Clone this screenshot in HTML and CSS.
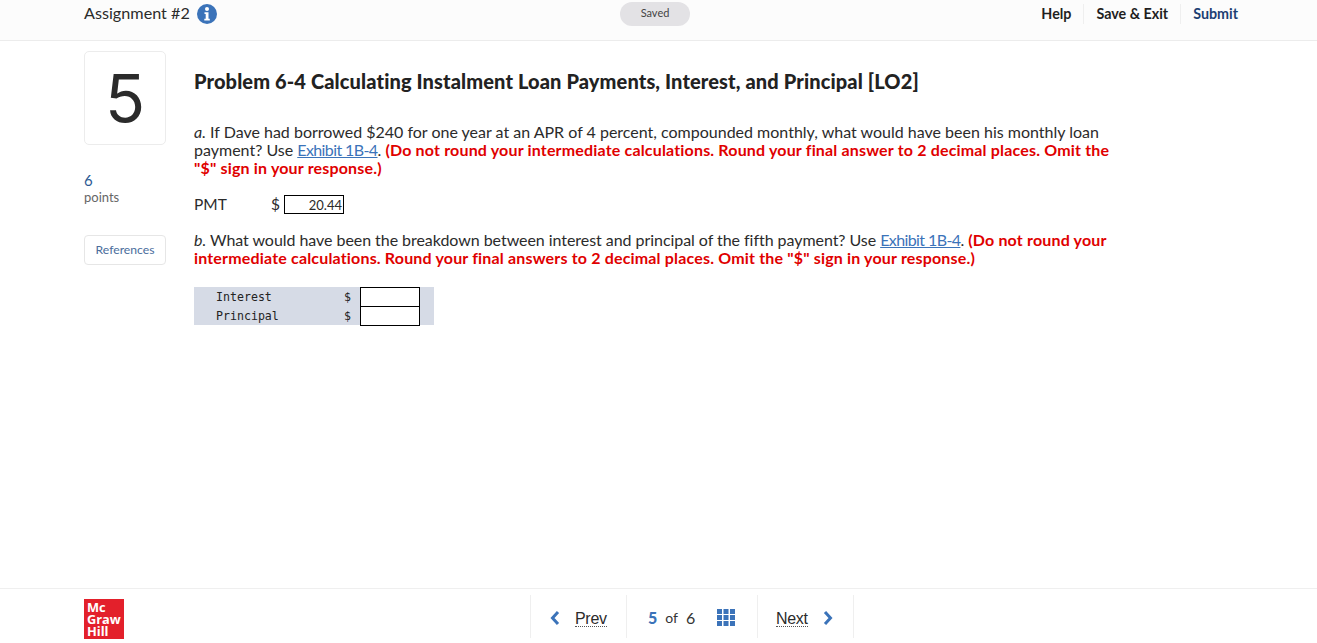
FILE: index.html
```html
<!DOCTYPE html>
<html lang="en">
<head>
    <meta charset="UTF-8">
    <title>Assignment #2</title>
    <link rel="stylesheet" href="styles.css">
</head>
<body>
    <header class="topbar">
        <div class="topbar-left">
            <span class="assignment">Assignment #2</span>
            <svg class="info-icon" viewBox="0 0 20 20" width="20" height="20">
                <circle cx="10" cy="10" r="10" fill="#3b73b9"/>
                <circle cx="10" cy="5" r="2" fill="#fff"/>
                <path d="M7.5 8.2h4v6.6h1.3v1.7H7.3v-1.7h1.4v-4.9H7.5z" fill="#fff"/>
            </svg>
        </div>
        <div class="saved">Saved</div>
        <nav class="topbar-links">
            <a>Help</a>
            <a>Save &amp; Exit</a>
            <a class="submit">Submit</a>
        </nav>
    </header>

    <main class="content">
        <aside class="side">
            <div class="question-num">5</div>
            <div class="points-value">6</div>
            <div class="points-label">points</div>
            <div class="references">References</div>
        </aside>

        <section class="question">
            <h1>Problem 6-4 Calculating Instalment Loan Payments, Interest, and Principal [LO2]</h1>

            <p class="part-a"><i>a.</i> If Dave had borrowed $240 for one year at an APR of 4 percent, compounded monthly, what would have been his monthly loan payment? Use <a class="exhibit">Exhibit 1B-4</a>. <b>(Do not round your intermediate calculations. Round your final answer to 2 decimal places. Omit the "$" sign in your response.)</b></p>

            <div class="pmt-row">
                <span class="pmt-label">PMT</span>
                <span class="pmt-dollar">$</span>
                <span class="answer-box filled">20.44</span>
            </div>

            <p class="part-b"><i>b.</i> What would have been the breakdown between interest and principal of the fifth payment? Use <a class="exhibit">Exhibit 1B-4</a>. <b>(Do not round your intermediate calculations. Round your final answers to 2 decimal places. Omit the "$" sign in your response.)</b></p>

            <div class="answer-table">
                <div class="answer-row">
                    <span class="row-label">Interest</span>
                    <span class="row-dollar">$</span>
                    <span class="answer-box"></span>
                </div>
                <div class="answer-row">
                    <span class="row-label">Principal</span>
                    <span class="row-dollar">$</span>
                    <span class="answer-box"></span>
                </div>
            </div>
        </section>
    </main>

    <footer class="bottombar">
        <div class="logo">Mc<br>Graw<br>Hill</div>
        <nav class="pager">
            <div class="pager-cell prev">
                <svg viewBox="0 0 10 16" width="10" height="16"><path d="M8 2L2.5 8 8 14" fill="none" stroke="#3b73b9" stroke-width="3"/></svg>
                <span class="pager-link">Prev</span>
            </div>
            <div class="pager-cell pages">
                <b>5</b><span class="of">of</span><span>6</span>
                <svg class="grid-icon" viewBox="0 0 18 17" width="18" height="17">
                    <path d="M0 0h5v5H0zM6.5 0h5v5h-5zM13 0h5v5h-5zM0 6h5v5H0zM6.5 6h5v5h-5zM13 6h5v5h-5zM0 12h5v5H0zM6.5 12h5v5h-5zM13 12h5v5h-5z" fill="#3b73b9"/>
                </svg>
            </div>
            <div class="pager-cell next">
                <span class="pager-link">Next</span>
                <svg viewBox="0 0 10 16" width="10" height="16"><path d="M2 2l5.5 6L2 14" fill="none" stroke="#3b73b9" stroke-width="3"/></svg>
            </div>
        </nav>
    </footer>
</body>
</html>
```

FILE: styles.css
```css
html, body {
    height: 100%;
}
body {
    font-family: Lato, 'Liberation Sans', sans-serif;
    background-color: #fff;
    margin: 0;
    color: #2b2b2b;
    display: flex;
    flex-direction: column;
    overflow: hidden;
}
.topbar {
    height: 40px;
    flex-shrink: 0;
    display: flex;
    align-items: flex-start;
    padding: 0 79px 0 84px;
    background-color: #fcfcfc;
    border-bottom: 1px solid #ececec;
}
.topbar-left {
    width: 536px;
    height: 28px;
    display: flex;
    align-items: center;
    gap: 8px;
}
.assignment {
    margin-top: -3px;
    font-size: 16.2px;
}
.info-icon {
    display: block;
    margin-left: -1px;
}
.saved {
    width: 70px;
    height: 24px;
    margin-top: 2px;
    border-radius: 12px;
    background-color: #e3e2e5;
    color: #444;
    font-size: 11px;
    line-height: 22px;
    text-align: center;
}
.topbar-links {
    margin-left: auto;
    margin-top: 4px;
    display: flex;
    font-size: 14.3px;
    font-weight: 700;
    color: #1f1f1f;
}
.topbar-links a {
    height: 20px;
    line-height: 20px;
    padding: 0 12px;
    border-left: 1px solid #efefef;
}
.topbar-links a:first-child {
    border-left: none;
}
.topbar-links a:last-child {
    padding-right: 0;
}
.submit {
    color: #1d3f72;
}
.content {
    flex: 1;
    display: flex;
    padding: 10px 0 0 84px;
    gap: 28px;
}
.side {
    width: 82px;
    flex-shrink: 0;
}
.question-num {
    height: 92px;
    border: 1px solid #ececec;
    border-radius: 5px;
    font-family: Inter, sans-serif;
    font-size: 66px;
    font-weight: 400;
    line-height: 92px;
    text-align: center;
}
.points-value {
    margin-top: 26px;
    font-size: 15px;
    line-height: 18px;
    color: #2c5a94;
}
.points-label {
    font-size: 13px;
    line-height: 16px;
    color: #666;
}
.references {
    margin-top: 30px;
    height: 28px;
    line-height: 28px;
    border: 1px solid #e6e6e6;
    border-radius: 4px;
    font-size: 12.2px;
    text-align: center;
    color: #4a6d9c;
}
.question {
    width: 925px;
}
h1 {
    margin: 18px 0 0;
    font-size: 20px;
    line-height: 24px;
    font-weight: 900;
    letter-spacing: 0.12px;
    color: #222;
}
.part-a, .part-b {
    margin: 0;
    font-size: 16px;
    line-height: 18px;
}
.part-a {
    margin-top: 30px;
}
.part-b {
    margin-top: 17px;
    letter-spacing: -0.05px;
}
.part-a b, .part-b b {
    color: #e00000;
    font-weight: 700;
    letter-spacing: 0.17px;
}
.exhibit {
    color: #3b73b9;
    text-decoration: underline;
    letter-spacing: -0.6px;
}
.pmt-row {
    margin-top: 17px;
    height: 20px;
    display: flex;
    align-items: center;
    font-size: 15.5px;
}
.pmt-label {
    width: 77px;
}
.pmt-dollar {
    width: 13px;
}
.answer-box {
    display: block;
    box-sizing: border-box;
    flex-shrink: 0;
    width: 60px;
    height: 19px;
    border: 1px solid #000;
    background-color: #fff;
}
.answer-row .answer-box {
    height: 20px;
}
.answer-box.filled {
    font-size: 13px;
    line-height: 18px;
    text-align: right;
    padding-right: 1px;
}
.answer-table {
    margin-top: 20px;
    width: 240px;
    height: 38px;
    background-color: #d6dbe6;
}
.answer-row {
    height: 19px;
    display: flex;
    align-items: center;
    font-family: 'DejaVu Sans Mono', 'Liberation Mono', monospace;
    font-size: 11.6px;
    color: #222;
}
.row-label {
    box-sizing: border-box;
    width: 150px;
    padding-left: 22px;
}
.row-dollar {
    width: 16px;
}
.bottombar {
    height: 54px;
    flex-shrink: 0;
    display: flex;
    align-items: flex-start;
    padding: 0 0 0 84px;
    border-top: 1px solid #efefef;
}
.logo {
    width: 40px;
    height: 40px;
    box-sizing: border-box;
    margin-top: 10px;
    padding: 2px 0 0 3px;
    background-color: #e3202b;
    color: #fff;
    font-family: 'Open Sans', sans-serif;
    font-size: 12.8px;
    font-weight: 700;
    line-height: 12px;
}
.pager {
    margin-left: 406px;
    margin-top: 6px;
    height: 43px;
    display: flex;
    border-right: 1px solid #efefef;
}
.pager-cell {
    display: flex;
    align-items: center;
    box-sizing: border-box;
    padding-top: 2px;
    border-left: 1px solid #efefef;
    font-size: 16px;
}
.prev {
    width: 96px;
    padding-left: 19px;
    gap: 15px;
}
.pages {
    width: 131px;
    padding-left: 21px;
    color: #333;
}
.pages b {
    color: #3b73b9;
    font-weight: 900;
}
.of {
    margin: 0 8px;
    font-size: 14px;
}
.grid-icon {
    margin-left: 22px;
}
.next {
    width: 96px;
    padding-left: 18px;
    gap: 15px;
}
.pager-link {
    margin-top: 3px;
    font-family: 'Liberation Sans', sans-serif;
    font-size: 16px;
    letter-spacing: -0.3px;
    line-height: 15px;
    border-bottom: 1px dotted #555;
}
```
